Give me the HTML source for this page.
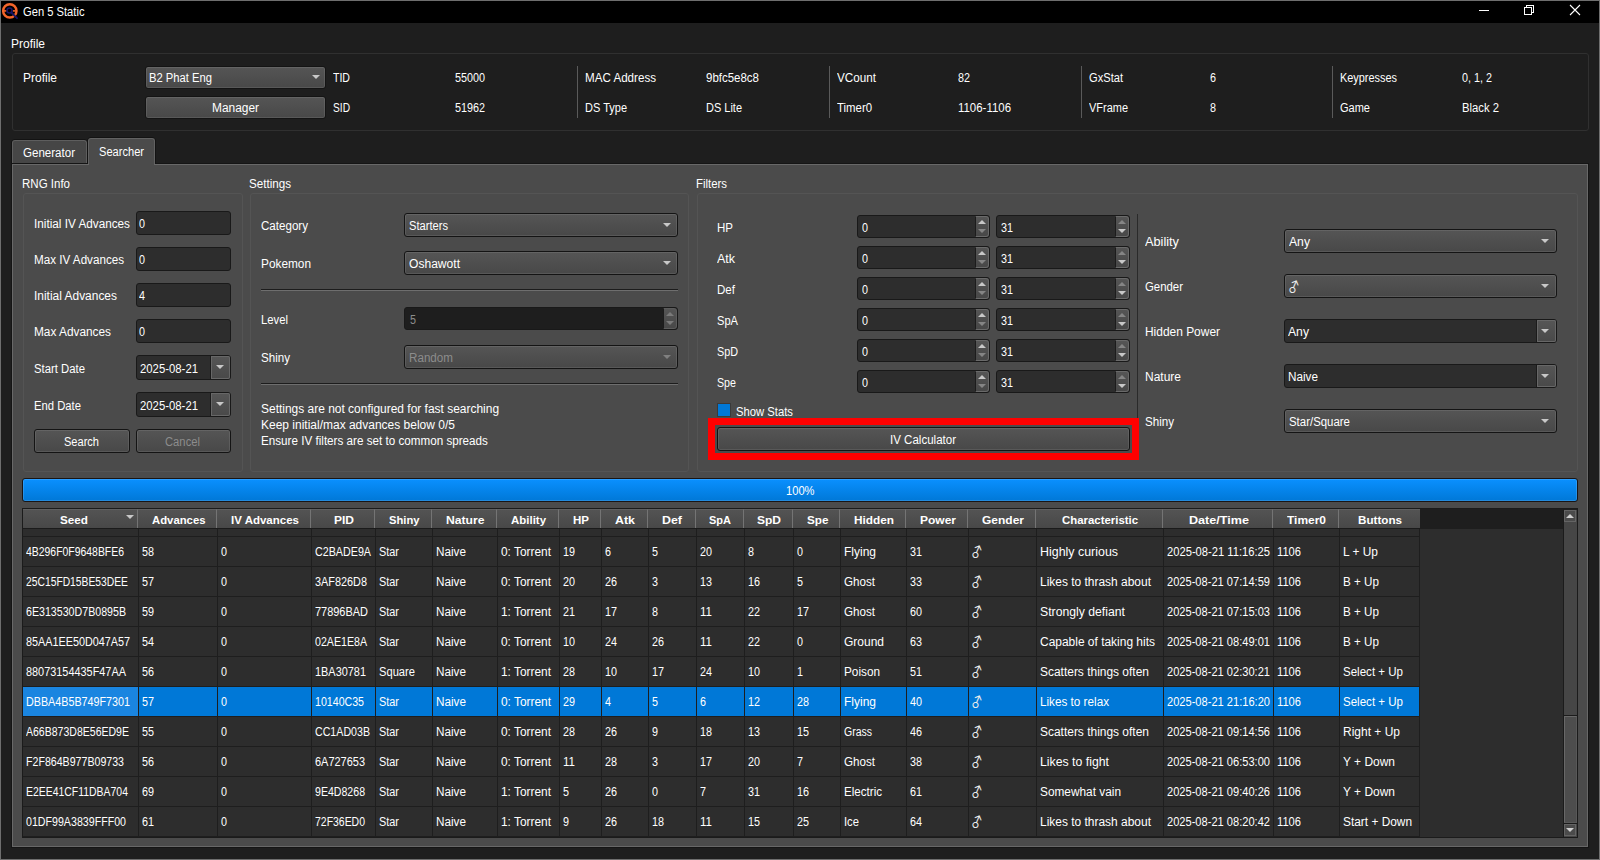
<!DOCTYPE html>
<html lang="en"><head><meta charset="utf-8"><title>Gen 5 Static</title>
<style>
html,body{margin:0;padding:0}
body{width:1600px;height:860px;background:#1e1e1e;overflow:hidden;position:relative;font-family:"Liberation Sans","DejaVu Sans",sans-serif;font-size:12px;color:#fff}
div,span.t,svg{position:absolute;box-sizing:border-box}
.t{line-height:14px;white-space:nowrap;transform-origin:0 0;display:block}
.b{font-weight:bold;font-size:11.5px}
.dis{color:#8c8c8c}
.g{font-family:"Noto Sans CJK JP","DejaVu Sans",sans-serif;font-size:14px;transform:rotate(-22deg);transform-origin:4.5px 10.5px;color:#ececec}
.cb{border:1px solid #141414;border-radius:3px;background:linear-gradient(#555,#484848);box-shadow:inset 0 0 0 1px rgba(255,255,255,.09)}
.in{border:1px solid #191919;border-radius:3px;background:#2d2d2d}
.ind{border:1px solid #191919;border-radius:3px;background:#1e1e1e}
.gb{border:1px solid #545454;border-radius:3px}
.sep{background:#5a5a5a}
.arr{width:0;height:0;border-left:4px solid transparent;border-right:4px solid transparent;border-top:4px solid #c8c8c8}
.arrs{width:0;height:0;border-left:4px solid transparent;border-right:4px solid transparent}
.sb{background:linear-gradient(#555,#484848);border:1px solid #6a6a6a;border-radius:0 3px 3px 0}
.hl{background:#1e1e1e}
</style></head><body>
<div style="left:0px;top:0px;width:1600px;height:860px;border:1px solid #6e6e6e"></div>
<div style="left:1px;top:1px;width:1598px;height:22px;background:#000"></div>
<svg style="left:0px;top:0px" width="24" height="24" viewBox="0 0 24 24">
<circle cx="9.8" cy="10.9" r="6.65" fill="none" stroke="#f4642a" stroke-width="2.5"/>
<rect x="4" y="10.1" width="2.4" height="1.6" fill="#f4642a"/><rect x="12.9" y="10.1" width="2.4" height="1.6" fill="#f4642a"/>
<circle cx="9.5" cy="10.6" r="2.5" fill="#000" stroke="#1b1466" stroke-width="1.5"/>
<line x1="11.3" y1="12.5" x2="17" y2="18.2" stroke="#1b1466" stroke-width="1.9" stroke-linecap="round"/>
</svg>
<svg style="left:1470px;top:1px" width="120" height="22" viewBox="0 0 120 22" shape-rendering="crispEdges">
<rect x="9" y="9" width="10" height="1" fill="#fff"/>
<path d="M56.5 6.5V4.5H63.5V11.5H61.5" fill="none" stroke="#fff"/>
<rect x="54.5" y="6.5" width="7" height="7" fill="none" stroke="#fff"/>
<path d="M100 4L110 14M110 4L100 14" fill="none" stroke="#fff" stroke-width="1.1" shape-rendering="geometricPrecision"/>
</svg>
<div style="left:12px;top:53px;width:1577px;height:78px;border:1px solid #303030;border-radius:3px"></div>
<div class="cb" style="left:145px;top:66px;width:181px;height:23px;"></div>
<div class="arr" style="left:311.5px;top:75px;width:8px;height:4px;"></div>
<div class="cb" style="left:145px;top:96px;width:181px;height:23px;"></div>
<div class="sep" style="left:577px;top:66px;width:1px;height:52px;"></div>
<div class="sep" style="left:829px;top:66px;width:1px;height:52px;"></div>
<div class="sep" style="left:1081px;top:66px;width:1px;height:52px;"></div>
<div class="sep" style="left:1332px;top:66px;width:1px;height:52px;"></div>
<div style="left:12px;top:164px;width:1576px;height:683px;background:#4b4b4b;border:1px solid #686868;box-shadow:0 0 0 1px #151515"></div>
<div style="left:12px;top:140px;width:75px;height:23px;background:#464646;border:1px solid #5e5e5e;border-bottom:none;border-radius:3px 3px 0 0;box-shadow:-1px 0 0 #131313,1px 0 0 #131313,0 -1px 0 #131313"></div>
<div style="left:88px;top:138px;width:67px;height:26px;background:#4b4b4b;border:1px solid #626262;border-bottom:none;border-radius:3px 3px 0 0;box-shadow:-1px 0 0 #131313,1px 0 0 #131313,0 -1px 0 #131313"></div>
<div style="left:89px;top:164px;width:65px;height:1px;background:#4b4b4b"></div>
<div class="gb" style="left:23px;top:193px;width:220px;height:279px;"></div>
<div class="gb" style="left:250px;top:193px;width:439px;height:279px;"></div>
<div class="gb" style="left:697px;top:193px;width:881px;height:279px;"></div>
<div class="in" style="left:136px;top:211px;width:95px;height:24px;"></div>
<div class="in" style="left:136px;top:247px;width:95px;height:24px;"></div>
<div class="in" style="left:136px;top:283px;width:95px;height:24px;"></div>
<div class="in" style="left:136px;top:319px;width:95px;height:24px;"></div>
<div class="in" style="left:136px;top:355px;width:95px;height:25px;"></div>
<div style="left:210px;top:356px;width:20px;height:23px;background:linear-gradient(#565656,#494949);border-left:1px solid #1b1b1b;border-radius:0 2px 2px 0;box-shadow:inset 0 0 0 1px #676767"></div>
<div class="arr" style="left:215.5px;top:365px;width:8px;height:4px;"></div>
<div class="in" style="left:136px;top:392px;width:95px;height:25px;"></div>
<div style="left:210px;top:393px;width:20px;height:23px;background:linear-gradient(#565656,#494949);border-left:1px solid #1b1b1b;border-radius:0 2px 2px 0;box-shadow:inset 0 0 0 1px #676767"></div>
<div class="arr" style="left:215.5px;top:402px;width:8px;height:4px;"></div>
<div class="cb" style="left:34px;top:429px;width:96px;height:24px;"></div>
<div class="cb" style="left:136px;top:429px;width:95px;height:24px;"></div>
<div class="cb" style="left:404px;top:213px;width:274px;height:24px;"></div>
<div class="arr" style="left:662.5px;top:223px;width:8px;height:4px;"></div>
<div class="cb" style="left:404px;top:251px;width:274px;height:24px;"></div>
<div class="arr" style="left:662.5px;top:261px;width:8px;height:4px;"></div>
<div style="left:261px;top:289px;width:417px;height:1px;background:#1c1c1c"></div>
<div style="left:261px;top:290px;width:417px;height:1px;background:#6e6e6e"></div>
<div class="ind" style="left:404px;top:307px;width:274px;height:23px;"></div>
<div class="sb" style="left:663px;top:308px;width:14px;height:21px;border-color:#5c5c5c;border-left-color:#1c1c1c"></div>
<div class="arrs" style="left:666px;top:312px;width:8px;height:4px;border-bottom:4px solid #7a7a7a"></div>
<div class="arrs" style="left:666px;top:321px;width:8px;height:4px;border-top:4px solid #7a7a7a"></div>
<div class="cb" style="left:404px;top:345px;width:274px;height:24px;"></div>
<div class="arr" style="left:662.5px;top:355px;width:8px;height:4px;border-top-color:#808080"></div>
<div style="left:261px;top:383px;width:417px;height:1px;background:#1c1c1c"></div>
<div style="left:261px;top:384px;width:417px;height:1px;background:#6e6e6e"></div>
<div class="in" style="left:857px;top:215px;width:133px;height:23px;"></div>
<div class="sb" style="left:975px;top:216px;width:14px;height:21px;border-left-color:#1c1c1c"></div>
<div class="arrs" style="left:978px;top:220px;width:8px;height:4px;border-bottom:4px solid #c8c8c8"></div>
<div class="arrs" style="left:978px;top:229px;width:8px;height:4px;border-top:4px solid #858585"></div>
<div class="in" style="left:996px;top:215px;width:134px;height:23px;"></div>
<div class="sb" style="left:1115px;top:216px;width:14px;height:21px;border-left-color:#1c1c1c"></div>
<div class="arrs" style="left:1118px;top:220px;width:8px;height:4px;border-bottom:4px solid #858585"></div>
<div class="arrs" style="left:1118px;top:229px;width:8px;height:4px;border-top:4px solid #c8c8c8"></div>
<div class="in" style="left:857px;top:246px;width:133px;height:23px;"></div>
<div class="sb" style="left:975px;top:247px;width:14px;height:21px;border-left-color:#1c1c1c"></div>
<div class="arrs" style="left:978px;top:251px;width:8px;height:4px;border-bottom:4px solid #c8c8c8"></div>
<div class="arrs" style="left:978px;top:260px;width:8px;height:4px;border-top:4px solid #858585"></div>
<div class="in" style="left:996px;top:246px;width:134px;height:23px;"></div>
<div class="sb" style="left:1115px;top:247px;width:14px;height:21px;border-left-color:#1c1c1c"></div>
<div class="arrs" style="left:1118px;top:251px;width:8px;height:4px;border-bottom:4px solid #858585"></div>
<div class="arrs" style="left:1118px;top:260px;width:8px;height:4px;border-top:4px solid #c8c8c8"></div>
<div class="in" style="left:857px;top:277px;width:133px;height:23px;"></div>
<div class="sb" style="left:975px;top:278px;width:14px;height:21px;border-left-color:#1c1c1c"></div>
<div class="arrs" style="left:978px;top:282px;width:8px;height:4px;border-bottom:4px solid #c8c8c8"></div>
<div class="arrs" style="left:978px;top:291px;width:8px;height:4px;border-top:4px solid #858585"></div>
<div class="in" style="left:996px;top:277px;width:134px;height:23px;"></div>
<div class="sb" style="left:1115px;top:278px;width:14px;height:21px;border-left-color:#1c1c1c"></div>
<div class="arrs" style="left:1118px;top:282px;width:8px;height:4px;border-bottom:4px solid #858585"></div>
<div class="arrs" style="left:1118px;top:291px;width:8px;height:4px;border-top:4px solid #c8c8c8"></div>
<div class="in" style="left:857px;top:308px;width:133px;height:23px;"></div>
<div class="sb" style="left:975px;top:309px;width:14px;height:21px;border-left-color:#1c1c1c"></div>
<div class="arrs" style="left:978px;top:313px;width:8px;height:4px;border-bottom:4px solid #c8c8c8"></div>
<div class="arrs" style="left:978px;top:322px;width:8px;height:4px;border-top:4px solid #858585"></div>
<div class="in" style="left:996px;top:308px;width:134px;height:23px;"></div>
<div class="sb" style="left:1115px;top:309px;width:14px;height:21px;border-left-color:#1c1c1c"></div>
<div class="arrs" style="left:1118px;top:313px;width:8px;height:4px;border-bottom:4px solid #858585"></div>
<div class="arrs" style="left:1118px;top:322px;width:8px;height:4px;border-top:4px solid #c8c8c8"></div>
<div class="in" style="left:857px;top:339px;width:133px;height:23px;"></div>
<div class="sb" style="left:975px;top:340px;width:14px;height:21px;border-left-color:#1c1c1c"></div>
<div class="arrs" style="left:978px;top:344px;width:8px;height:4px;border-bottom:4px solid #c8c8c8"></div>
<div class="arrs" style="left:978px;top:353px;width:8px;height:4px;border-top:4px solid #858585"></div>
<div class="in" style="left:996px;top:339px;width:134px;height:23px;"></div>
<div class="sb" style="left:1115px;top:340px;width:14px;height:21px;border-left-color:#1c1c1c"></div>
<div class="arrs" style="left:1118px;top:344px;width:8px;height:4px;border-bottom:4px solid #858585"></div>
<div class="arrs" style="left:1118px;top:353px;width:8px;height:4px;border-top:4px solid #c8c8c8"></div>
<div class="in" style="left:857px;top:370px;width:133px;height:23px;"></div>
<div class="sb" style="left:975px;top:371px;width:14px;height:21px;border-left-color:#1c1c1c"></div>
<div class="arrs" style="left:978px;top:375px;width:8px;height:4px;border-bottom:4px solid #c8c8c8"></div>
<div class="arrs" style="left:978px;top:384px;width:8px;height:4px;border-top:4px solid #858585"></div>
<div class="in" style="left:996px;top:370px;width:134px;height:23px;"></div>
<div class="sb" style="left:1115px;top:371px;width:14px;height:21px;border-left-color:#1c1c1c"></div>
<div class="arrs" style="left:1118px;top:375px;width:8px;height:4px;border-bottom:4px solid #858585"></div>
<div class="arrs" style="left:1118px;top:384px;width:8px;height:4px;border-top:4px solid #c8c8c8"></div>
<div style="left:717px;top:403px;width:14px;height:14px;background:#0078d7;border:1px solid #3a3a3a"></div>
<div style="left:1137px;top:214px;width:1px;height:246px;background:#2a2a2a"></div>
<div class="cb" style="left:717px;top:427px;width:413px;height:24px;"></div>
<div style="left:708px;top:418px;width:431px;height:42px;border:7px solid #ff0000"></div>
<div class="cb" style="left:1284px;top:229px;width:273px;height:24px;"></div>
<div class="arr" style="left:1541.2px;top:239px;width:8px;height:4px;"></div>
<div class="cb" style="left:1284px;top:274px;width:273px;height:24px;"></div>
<div class="arr" style="left:1541.2px;top:284px;width:8px;height:4px;"></div>
<div class="in" style="left:1284px;top:319px;width:273px;height:24px;"></div>
<div style="left:1536px;top:320px;width:20px;height:22px;background:linear-gradient(#565656,#494949);border-left:1px solid #1b1b1b;border-radius:0 2px 2px 0;box-shadow:inset 0 0 0 1px #676767"></div>
<div class="arr" style="left:1541.2px;top:329px;width:8px;height:4px;"></div>
<div class="in" style="left:1284px;top:364px;width:273px;height:24px;"></div>
<div style="left:1536px;top:365px;width:20px;height:22px;background:linear-gradient(#565656,#494949);border-left:1px solid #1b1b1b;border-radius:0 2px 2px 0;box-shadow:inset 0 0 0 1px #676767"></div>
<div class="arr" style="left:1541.2px;top:374px;width:8px;height:4px;"></div>
<div class="cb" style="left:1284px;top:409px;width:273px;height:24px;"></div>
<div class="arr" style="left:1541.2px;top:419px;width:8px;height:4px;"></div>
<div style="left:22px;top:478px;width:1556px;height:24px;border:1px solid #1a1514;border-radius:3px;background:linear-gradient(#0a90ff,#0078d7);box-shadow:inset 0 0 0 1px rgba(255,255,255,.14)"></div>
<div style="left:22px;top:508px;width:1556px;height:330px;background:#2d2d2d;border:1px solid #1b1b1b"></div>
<div style="left:23px;top:509px;width:1554px;height:20px;background:#1e1e1e"></div>
<div style="left:23px;top:509px;width:115px;height:19px;background:linear-gradient(#535353,#484848);border-top:1px solid #606060;border-right:1px solid #747474"></div>
<div style="left:138px;top:509px;width:79px;height:19px;background:linear-gradient(#535353,#484848);border-top:1px solid #606060;border-right:1px solid #747474"></div>
<div style="left:217px;top:509px;width:94px;height:19px;background:linear-gradient(#535353,#484848);border-top:1px solid #606060;border-right:1px solid #747474"></div>
<div style="left:311px;top:509px;width:64px;height:19px;background:linear-gradient(#535353,#484848);border-top:1px solid #606060;border-right:1px solid #747474"></div>
<div style="left:375px;top:509px;width:57px;height:19px;background:linear-gradient(#535353,#484848);border-top:1px solid #606060;border-right:1px solid #747474"></div>
<div style="left:432px;top:509px;width:65px;height:19px;background:linear-gradient(#535353,#484848);border-top:1px solid #606060;border-right:1px solid #747474"></div>
<div style="left:497px;top:509px;width:62px;height:19px;background:linear-gradient(#535353,#484848);border-top:1px solid #606060;border-right:1px solid #747474"></div>
<div style="left:559px;top:509px;width:42px;height:19px;background:linear-gradient(#535353,#484848);border-top:1px solid #606060;border-right:1px solid #747474"></div>
<div style="left:601px;top:509px;width:47px;height:19px;background:linear-gradient(#535353,#484848);border-top:1px solid #606060;border-right:1px solid #747474"></div>
<div style="left:648px;top:509px;width:48px;height:19px;background:linear-gradient(#535353,#484848);border-top:1px solid #606060;border-right:1px solid #747474"></div>
<div style="left:696px;top:509px;width:48px;height:19px;background:linear-gradient(#535353,#484848);border-top:1px solid #606060;border-right:1px solid #747474"></div>
<div style="left:744px;top:509px;width:49px;height:19px;background:linear-gradient(#535353,#484848);border-top:1px solid #606060;border-right:1px solid #747474"></div>
<div style="left:793px;top:509px;width:47px;height:19px;background:linear-gradient(#535353,#484848);border-top:1px solid #606060;border-right:1px solid #747474"></div>
<div style="left:840px;top:509px;width:66px;height:19px;background:linear-gradient(#535353,#484848);border-top:1px solid #606060;border-right:1px solid #747474"></div>
<div style="left:906px;top:509px;width:62px;height:19px;background:linear-gradient(#535353,#484848);border-top:1px solid #606060;border-right:1px solid #747474"></div>
<div style="left:968px;top:509px;width:68px;height:19px;background:linear-gradient(#535353,#484848);border-top:1px solid #606060;border-right:1px solid #747474"></div>
<div style="left:1036px;top:509px;width:127px;height:19px;background:linear-gradient(#535353,#484848);border-top:1px solid #606060;border-right:1px solid #747474"></div>
<div style="left:1163px;top:509px;width:110px;height:19px;background:linear-gradient(#535353,#484848);border-top:1px solid #606060;border-right:1px solid #747474"></div>
<div style="left:1273px;top:509px;width:66px;height:19px;background:linear-gradient(#535353,#484848);border-top:1px solid #606060;border-right:1px solid #747474"></div>
<div style="left:1339px;top:509px;width:81px;height:19px;background:linear-gradient(#535353,#484848);border-top:1px solid #606060"></div>
<div style="left:23px;top:528px;width:1397px;height:1px;background:#1b1b1b"></div>
<div class="arr" style="left:126px;top:515px;width:8px;height:4px;"></div>
<div style="left:23px;top:687px;width:1396px;height:29px;background:#0078d7"></div>
<div style="left:23px;top:687px;width:115px;height:29px;background:#1a85e0"></div>
<div class="hl" style="left:23px;top:536px;width:1397px;height:1px;"></div>
<div class="hl" style="left:23px;top:566px;width:1397px;height:1px;"></div>
<div class="hl" style="left:23px;top:596px;width:1397px;height:1px;"></div>
<div class="hl" style="left:23px;top:626px;width:1397px;height:1px;"></div>
<div class="hl" style="left:23px;top:656px;width:1397px;height:1px;"></div>
<div class="hl" style="left:23px;top:686px;width:1397px;height:1px;"></div>
<div class="hl" style="left:23px;top:716px;width:1397px;height:1px;"></div>
<div class="hl" style="left:23px;top:746px;width:1397px;height:1px;"></div>
<div class="hl" style="left:23px;top:776px;width:1397px;height:1px;"></div>
<div class="hl" style="left:23px;top:806px;width:1397px;height:1px;"></div>
<div class="hl" style="left:23px;top:836px;width:1397px;height:1px;"></div>
<div class="hl" style="left:138px;top:529px;width:1px;height:308px;"></div>
<div class="hl" style="left:217px;top:529px;width:1px;height:308px;"></div>
<div class="hl" style="left:311px;top:529px;width:1px;height:308px;"></div>
<div class="hl" style="left:375px;top:529px;width:1px;height:308px;"></div>
<div class="hl" style="left:432px;top:529px;width:1px;height:308px;"></div>
<div class="hl" style="left:497px;top:529px;width:1px;height:308px;"></div>
<div class="hl" style="left:559px;top:529px;width:1px;height:308px;"></div>
<div class="hl" style="left:601px;top:529px;width:1px;height:308px;"></div>
<div class="hl" style="left:648px;top:529px;width:1px;height:308px;"></div>
<div class="hl" style="left:696px;top:529px;width:1px;height:308px;"></div>
<div class="hl" style="left:744px;top:529px;width:1px;height:308px;"></div>
<div class="hl" style="left:793px;top:529px;width:1px;height:308px;"></div>
<div class="hl" style="left:840px;top:529px;width:1px;height:308px;"></div>
<div class="hl" style="left:906px;top:529px;width:1px;height:308px;"></div>
<div class="hl" style="left:968px;top:529px;width:1px;height:308px;"></div>
<div class="hl" style="left:1036px;top:529px;width:1px;height:308px;"></div>
<div class="hl" style="left:1163px;top:529px;width:1px;height:308px;"></div>
<div class="hl" style="left:1273px;top:529px;width:1px;height:308px;"></div>
<div class="hl" style="left:1339px;top:529px;width:1px;height:308px;"></div>
<div class="hl" style="left:1419px;top:529px;width:1px;height:308px;"></div>
<div style="left:1563px;top:509px;width:1px;height:328px;background:#1b1b1b"></div>
<div style="left:1564px;top:509px;width:13px;height:328px;background:#464646"></div>
<div style="left:1564px;top:509px;width:13px;height:1px;background:#1e1e1e"></div>
<div style="left:1564px;top:510px;width:12px;height:12px;background:#4b4b4b;border:1px solid #646464"></div>
<div class="arrs" style="left:1567px;top:514px;width:6px;height:4px;border-left:4px solid transparent;border-right:4px solid transparent;border-bottom:4px solid #d0d0d0;left:1566px"></div>
<div style="left:1564px;top:715px;width:13px;height:1px;background:#1b1b1b"></div>
<div style="left:1564px;top:716px;width:13px;height:107px;background:#4d4d4d;border:1px solid #686868;border-right-color:#585858;border-bottom-color:#585858"></div>
<div style="left:1564px;top:823px;width:13px;height:1px;background:#1b1b1b"></div>
<div style="left:1564px;top:824px;width:12px;height:12px;background:#4b4b4b;border:1px solid #646464"></div>
<div class="arr" style="left:1566px;top:828px;width:8px;height:4px;border-top-color:#d0d0d0"></div>
<span class="t" style="left:23px;top:5px;transform:scaleX(0.931)">Gen 5 Static</span>
<span class="t" style="left:11px;top:37px;transform:scaleX(1.000)">Profile</span>
<span class="t" style="left:23px;top:71px;transform:scaleX(1.000)">Profile</span>
<span class="t" style="left:149px;top:71px;transform:scaleX(0.935)">B2 Phat Eng</span>
<span class="t" style="left:212px;top:101px;transform:scaleX(0.992)">Manager</span>
<span class="t" style="left:333px;top:71px;transform:scaleX(0.879)">TID</span>
<span class="t" style="left:333px;top:101px;transform:scaleX(0.849)">SID</span>
<span class="t" style="left:455px;top:71px;transform:scaleX(0.899)">55000</span>
<span class="t" style="left:455px;top:101px;transform:scaleX(0.899)">51962</span>
<span class="t" style="left:585px;top:71px;transform:scaleX(0.968)">MAC Address</span>
<span class="t" style="left:585px;top:101px;transform:scaleX(0.917)">DS Type</span>
<span class="t" style="left:706px;top:71px;transform:scaleX(0.957)">9bfc5e8c8</span>
<span class="t" style="left:706px;top:101px;transform:scaleX(0.915)">DS Lite</span>
<span class="t" style="left:837px;top:71px;transform:scaleX(0.974)">VCount</span>
<span class="t" style="left:837px;top:101px;transform:scaleX(0.949)">Timer0</span>
<span class="t" style="left:958px;top:71px;transform:scaleX(0.898)">82</span>
<span class="t" style="left:958px;top:101px;transform:scaleX(0.953)">1106-1106</span>
<span class="t" style="left:1089px;top:71px;transform:scaleX(0.927)">GxStat</span>
<span class="t" style="left:1089px;top:101px;transform:scaleX(0.914)">VFrame</span>
<span class="t" style="left:1210px;top:71px;transform:scaleX(0.897)">6</span>
<span class="t" style="left:1210px;top:101px;transform:scaleX(0.897)">8</span>
<span class="t" style="left:1340px;top:71px;transform:scaleX(0.909)">Keypresses</span>
<span class="t" style="left:1340px;top:101px;transform:scaleX(0.918)">Game</span>
<span class="t" style="left:1462px;top:71px;transform:scaleX(0.899)">0, 1, 2</span>
<span class="t" style="left:1462px;top:101px;transform:scaleX(0.940)">Black 2</span>
<span class="t" style="left:23px;top:146px;transform:scaleX(0.962)">Generator</span>
<span class="t" style="left:99px;top:145px;transform:scaleX(0.924)">Searcher</span>
<span class="t" style="left:22px;top:177px;transform:scaleX(0.960)">RNG Info</span>
<span class="t" style="left:249px;top:177px;transform:scaleX(0.969)">Settings</span>
<span class="t" style="left:696px;top:177px;transform:scaleX(0.949)">Filters</span>
<span class="t" style="left:34px;top:217px;transform:scaleX(0.979)">Initial IV Advances</span>
<span class="t" style="left:139px;top:217px;transform:scaleX(0.897)">0</span>
<span class="t" style="left:34px;top:253px;transform:scaleX(0.971)">Max IV Advances</span>
<span class="t" style="left:139px;top:253px;transform:scaleX(0.897)">0</span>
<span class="t" style="left:34px;top:289px;transform:scaleX(0.995)">Initial Advances</span>
<span class="t" style="left:139px;top:289px;transform:scaleX(0.897)">4</span>
<span class="t" style="left:34px;top:325px;transform:scaleX(0.987)">Max Advances</span>
<span class="t" style="left:139px;top:325px;transform:scaleX(0.897)">0</span>
<span class="t" style="left:34px;top:362px;transform:scaleX(0.944)">Start Date</span>
<span class="t" style="left:140px;top:362px;transform:scaleX(0.945)">2025-08-21</span>
<span class="t" style="left:34px;top:399px;transform:scaleX(0.939)">End Date</span>
<span class="t" style="left:140px;top:399px;transform:scaleX(0.945)">2025-08-21</span>
<span class="t" style="left:64px;top:435px;transform:scaleX(0.920)">Search</span>
<span class="t dis" style="left:165px;top:435px;transform:scaleX(0.937)">Cancel</span>
<span class="t" style="left:261px;top:219px;transform:scaleX(0.965)">Category</span>
<span class="t" style="left:409px;top:219px;transform:scaleX(0.928)">Starters</span>
<span class="t" style="left:261px;top:257px;transform:scaleX(0.986)">Pokemon</span>
<span class="t" style="left:409px;top:257px;transform:scaleX(1.006)">Oshawott</span>
<span class="t" style="left:261px;top:313px;transform:scaleX(0.941)">Level</span>
<span class="t dis" style="left:410px;top:313px;transform:scaleX(0.897)">5</span>
<span class="t" style="left:261px;top:351px;transform:scaleX(0.966)">Shiny</span>
<span class="t dis" style="left:409px;top:351px;transform:scaleX(0.970)">Random</span>
<span class="t" style="left:261px;top:402px;transform:scaleX(0.997)">Settings are not configured for fast searching</span>
<span class="t" style="left:261px;top:418px;transform:scaleX(0.999)">Keep initial/max advances below 0/5</span>
<span class="t" style="left:261px;top:434px;transform:scaleX(0.972)">Ensure IV filters are set to common spreads</span>
<span class="t" style="left:717px;top:221px;transform:scaleX(0.960)">HP</span>
<span class="t" style="left:862px;top:221px;transform:scaleX(0.897)">0</span>
<span class="t" style="left:1001px;top:221px;transform:scaleX(0.898)">31</span>
<span class="t" style="left:717px;top:252px;transform:scaleX(1.038)">Atk</span>
<span class="t" style="left:862px;top:252px;transform:scaleX(0.897)">0</span>
<span class="t" style="left:1001px;top:252px;transform:scaleX(0.898)">31</span>
<span class="t" style="left:717px;top:283px;transform:scaleX(0.963)">Def</span>
<span class="t" style="left:862px;top:283px;transform:scaleX(0.897)">0</span>
<span class="t" style="left:1001px;top:283px;transform:scaleX(0.898)">31</span>
<span class="t" style="left:717px;top:314px;transform:scaleX(0.926)">SpA</span>
<span class="t" style="left:862px;top:314px;transform:scaleX(0.897)">0</span>
<span class="t" style="left:1001px;top:314px;transform:scaleX(0.898)">31</span>
<span class="t" style="left:717px;top:345px;transform:scaleX(0.900)">SpD</span>
<span class="t" style="left:862px;top:345px;transform:scaleX(0.897)">0</span>
<span class="t" style="left:1001px;top:345px;transform:scaleX(0.898)">31</span>
<span class="t" style="left:717px;top:376px;transform:scaleX(0.890)">Spe</span>
<span class="t" style="left:862px;top:376px;transform:scaleX(0.897)">0</span>
<span class="t" style="left:1001px;top:376px;transform:scaleX(0.898)">31</span>
<span class="t" style="left:736px;top:405px;transform:scaleX(0.939)">Show Stats</span>
<span class="t" style="left:890px;top:433px;transform:scaleX(0.961)">IV Calculator</span>
<span class="t" style="left:1145px;top:235px;transform:scaleX(1.062)">Ability</span>
<span class="t" style="left:1289px;top:235px;transform:scaleX(1.015)">Any</span>
<span class="t" style="left:1145px;top:280px;transform:scaleX(0.949)">Gender</span>
<span class="t g" style="left:1288px;top:280px">♂</span>
<span class="t" style="left:1145px;top:325px;transform:scaleX(0.995)">Hidden Power</span>
<span class="t" style="left:1288px;top:325px;transform:scaleX(1.015)">Any</span>
<span class="t" style="left:1145px;top:370px;transform:scaleX(0.999)">Nature</span>
<span class="t" style="left:1288px;top:370px;transform:scaleX(0.978)">Naive</span>
<span class="t" style="left:1145px;top:415px;transform:scaleX(0.966)">Shiny</span>
<span class="t" style="left:1289px;top:415px;transform:scaleX(0.952)">Star/Square</span>
<span class="t" style="left:786px;top:484px;transform:scaleX(0.928)">100%</span>
<span class="t b" style="left:60px;top:513px;transform:scaleX(1.018)">Seed</span>
<span class="t b" style="left:152px;top:513px;transform:scaleX(0.984)">Advances</span>
<span class="t b" style="left:231px;top:513px;transform:scaleX(1.000)">IV Advances</span>
<span class="t b" style="left:334px;top:513px;transform:scaleX(1.043)">PID</span>
<span class="t b" style="left:389px;top:513px;transform:scaleX(0.974)">Shiny</span>
<span class="t b" style="left:446px;top:513px;transform:scaleX(1.057)">Nature</span>
<span class="t b" style="left:511px;top:513px;transform:scaleX(0.996)">Ability</span>
<span class="t b" style="left:573px;top:513px;transform:scaleX(1.001)">HP</span>
<span class="t b" style="left:615px;top:513px;transform:scaleX(1.079)">Atk</span>
<span class="t b" style="left:662px;top:513px;transform:scaleX(1.079)">Def</span>
<span class="t b" style="left:709px;top:513px;transform:scaleX(0.957)">SpA</span>
<span class="t b" style="left:757px;top:513px;transform:scaleX(1.043)">SpD</span>
<span class="t b" style="left:807px;top:513px;transform:scaleX(1.019)">Spe</span>
<span class="t b" style="left:854px;top:513px;transform:scaleX(1.026)">Hidden</span>
<span class="t b" style="left:920px;top:513px;transform:scaleX(1.043)">Power</span>
<span class="t b" style="left:982px;top:513px;transform:scaleX(1.043)">Gender</span>
<span class="t b" style="left:1062px;top:513px;transform:scaleX(0.991)">Characteristic</span>
<span class="t b" style="left:1189px;top:513px;transform:scaleX(1.096)">Date/Time</span>
<span class="t b" style="left:1287px;top:513px;transform:scaleX(1.040)">Timer0</span>
<span class="t b" style="left:1358px;top:513px;transform:scaleX(1.013)">Buttons</span>
<span class="t" style="left:26px;top:545px;transform:scaleX(0.869)">4B296F0F9648BFE6</span>
<span class="t" style="left:142px;top:545px;transform:scaleX(0.898)">58</span>
<span class="t" style="left:221px;top:545px;transform:scaleX(0.897)">0</span>
<span class="t" style="left:315px;top:545px;transform:scaleX(0.893)">C2BADE9A</span>
<span class="t" style="left:379px;top:545px;transform:scaleX(0.908)">Star</span>
<span class="t" style="left:436px;top:545px;transform:scaleX(0.978)">Naive</span>
<span class="t" style="left:501px;top:545px;transform:scaleX(0.990)">0: Torrent</span>
<span class="t" style="left:563px;top:545px;transform:scaleX(0.898)">19</span>
<span class="t" style="left:605px;top:545px;transform:scaleX(0.897)">6</span>
<span class="t" style="left:652px;top:545px;transform:scaleX(0.897)">5</span>
<span class="t" style="left:700px;top:545px;transform:scaleX(0.898)">20</span>
<span class="t" style="left:748px;top:545px;transform:scaleX(0.897)">8</span>
<span class="t" style="left:797px;top:545px;transform:scaleX(0.897)">0</span>
<span class="t" style="left:844px;top:545px;transform:scaleX(1.000)">Flying</span>
<span class="t" style="left:910px;top:545px;transform:scaleX(0.898)">31</span>
<span class="t g" style="left:971px;top:545px">♂</span>
<span class="t" style="left:1040px;top:545px;transform:scaleX(1.035)">Highly curious</span>
<span class="t" style="left:1167px;top:545px;transform:scaleX(0.932)">2025-08-21 11:16:25</span>
<span class="t" style="left:1277px;top:545px;transform:scaleX(0.930)">1106</span>
<span class="t" style="left:1343px;top:545px;transform:scaleX(0.993)">L + Up</span>
<span class="t" style="left:26px;top:575px;transform:scaleX(0.859)">25C15FD15BE53DEE</span>
<span class="t" style="left:142px;top:575px;transform:scaleX(0.898)">57</span>
<span class="t" style="left:221px;top:575px;transform:scaleX(0.897)">0</span>
<span class="t" style="left:315px;top:575px;transform:scaleX(0.906)">3AF826D8</span>
<span class="t" style="left:379px;top:575px;transform:scaleX(0.908)">Star</span>
<span class="t" style="left:436px;top:575px;transform:scaleX(0.978)">Naive</span>
<span class="t" style="left:501px;top:575px;transform:scaleX(0.990)">0: Torrent</span>
<span class="t" style="left:563px;top:575px;transform:scaleX(0.898)">20</span>
<span class="t" style="left:605px;top:575px;transform:scaleX(0.898)">26</span>
<span class="t" style="left:652px;top:575px;transform:scaleX(0.897)">3</span>
<span class="t" style="left:700px;top:575px;transform:scaleX(0.898)">13</span>
<span class="t" style="left:748px;top:575px;transform:scaleX(0.898)">16</span>
<span class="t" style="left:797px;top:575px;transform:scaleX(0.897)">5</span>
<span class="t" style="left:844px;top:575px;transform:scaleX(0.968)">Ghost</span>
<span class="t" style="left:910px;top:575px;transform:scaleX(0.898)">33</span>
<span class="t g" style="left:971px;top:575px">♂</span>
<span class="t" style="left:1040px;top:575px;transform:scaleX(0.996)">Likes to thrash about</span>
<span class="t" style="left:1167px;top:575px;transform:scaleX(0.924)">2025-08-21 07:14:59</span>
<span class="t" style="left:1277px;top:575px;transform:scaleX(0.930)">1106</span>
<span class="t" style="left:1343px;top:575px;transform:scaleX(0.972)">B + Up</span>
<span class="t" style="left:26px;top:605px;transform:scaleX(0.887)">6E313530D7B0895B</span>
<span class="t" style="left:142px;top:605px;transform:scaleX(0.898)">59</span>
<span class="t" style="left:221px;top:605px;transform:scaleX(0.897)">0</span>
<span class="t" style="left:315px;top:605px;transform:scaleX(0.913)">77896BAD</span>
<span class="t" style="left:379px;top:605px;transform:scaleX(0.908)">Star</span>
<span class="t" style="left:436px;top:605px;transform:scaleX(0.978)">Naive</span>
<span class="t" style="left:501px;top:605px;transform:scaleX(0.990)">1: Torrent</span>
<span class="t" style="left:563px;top:605px;transform:scaleX(0.898)">21</span>
<span class="t" style="left:605px;top:605px;transform:scaleX(0.898)">17</span>
<span class="t" style="left:652px;top:605px;transform:scaleX(0.897)">8</span>
<span class="t" style="left:700px;top:605px;transform:scaleX(0.962)">11</span>
<span class="t" style="left:748px;top:605px;transform:scaleX(0.898)">22</span>
<span class="t" style="left:797px;top:605px;transform:scaleX(0.898)">17</span>
<span class="t" style="left:844px;top:605px;transform:scaleX(0.968)">Ghost</span>
<span class="t" style="left:910px;top:605px;transform:scaleX(0.898)">60</span>
<span class="t g" style="left:971px;top:605px">♂</span>
<span class="t" style="left:1040px;top:605px;transform:scaleX(1.019)">Strongly defiant</span>
<span class="t" style="left:1167px;top:605px;transform:scaleX(0.924)">2025-08-21 07:15:03</span>
<span class="t" style="left:1277px;top:605px;transform:scaleX(0.930)">1106</span>
<span class="t" style="left:1343px;top:605px;transform:scaleX(0.972)">B + Up</span>
<span class="t" style="left:26px;top:635px;transform:scaleX(0.901)">85AA1EE50D047A57</span>
<span class="t" style="left:142px;top:635px;transform:scaleX(0.898)">54</span>
<span class="t" style="left:221px;top:635px;transform:scaleX(0.897)">0</span>
<span class="t" style="left:315px;top:635px;transform:scaleX(0.886)">02AE1E8A</span>
<span class="t" style="left:379px;top:635px;transform:scaleX(0.908)">Star</span>
<span class="t" style="left:436px;top:635px;transform:scaleX(0.978)">Naive</span>
<span class="t" style="left:501px;top:635px;transform:scaleX(0.990)">0: Torrent</span>
<span class="t" style="left:563px;top:635px;transform:scaleX(0.898)">10</span>
<span class="t" style="left:605px;top:635px;transform:scaleX(0.898)">24</span>
<span class="t" style="left:652px;top:635px;transform:scaleX(0.898)">26</span>
<span class="t" style="left:700px;top:635px;transform:scaleX(0.962)">11</span>
<span class="t" style="left:748px;top:635px;transform:scaleX(0.898)">22</span>
<span class="t" style="left:797px;top:635px;transform:scaleX(0.897)">0</span>
<span class="t" style="left:844px;top:635px;transform:scaleX(0.999)">Ground</span>
<span class="t" style="left:910px;top:635px;transform:scaleX(0.898)">63</span>
<span class="t g" style="left:971px;top:635px">♂</span>
<span class="t" style="left:1040px;top:635px;transform:scaleX(0.996)">Capable of taking hits</span>
<span class="t" style="left:1167px;top:635px;transform:scaleX(0.924)">2025-08-21 08:49:01</span>
<span class="t" style="left:1277px;top:635px;transform:scaleX(0.930)">1106</span>
<span class="t" style="left:1343px;top:635px;transform:scaleX(0.972)">B + Up</span>
<span class="t" style="left:26px;top:665px;transform:scaleX(0.908)">88073154435F47AA</span>
<span class="t" style="left:142px;top:665px;transform:scaleX(0.898)">56</span>
<span class="t" style="left:221px;top:665px;transform:scaleX(0.897)">0</span>
<span class="t" style="left:315px;top:665px;transform:scaleX(0.910)">1BA30781</span>
<span class="t" style="left:379px;top:665px;transform:scaleX(0.930)">Square</span>
<span class="t" style="left:436px;top:665px;transform:scaleX(0.978)">Naive</span>
<span class="t" style="left:501px;top:665px;transform:scaleX(0.990)">1: Torrent</span>
<span class="t" style="left:563px;top:665px;transform:scaleX(0.898)">28</span>
<span class="t" style="left:605px;top:665px;transform:scaleX(0.898)">10</span>
<span class="t" style="left:652px;top:665px;transform:scaleX(0.898)">17</span>
<span class="t" style="left:700px;top:665px;transform:scaleX(0.898)">24</span>
<span class="t" style="left:748px;top:665px;transform:scaleX(0.898)">10</span>
<span class="t" style="left:797px;top:665px;transform:scaleX(0.897)">1</span>
<span class="t" style="left:844px;top:665px;transform:scaleX(0.981)">Poison</span>
<span class="t" style="left:910px;top:665px;transform:scaleX(0.898)">51</span>
<span class="t g" style="left:971px;top:665px">♂</span>
<span class="t" style="left:1040px;top:665px;transform:scaleX(0.996)">Scatters things often</span>
<span class="t" style="left:1167px;top:665px;transform:scaleX(0.924)">2025-08-21 02:30:21</span>
<span class="t" style="left:1277px;top:665px;transform:scaleX(0.930)">1106</span>
<span class="t" style="left:1343px;top:665px;transform:scaleX(0.962)">Select + Up</span>
<span class="t" style="left:26px;top:695px;transform:scaleX(0.896)">DBBA4B5B749F7301</span>
<span class="t" style="left:142px;top:695px;transform:scaleX(0.898)">57</span>
<span class="t" style="left:221px;top:695px;transform:scaleX(0.897)">0</span>
<span class="t" style="left:315px;top:695px;transform:scaleX(0.885)">10140C35</span>
<span class="t" style="left:379px;top:695px;transform:scaleX(0.908)">Star</span>
<span class="t" style="left:436px;top:695px;transform:scaleX(0.978)">Naive</span>
<span class="t" style="left:501px;top:695px;transform:scaleX(0.990)">0: Torrent</span>
<span class="t" style="left:563px;top:695px;transform:scaleX(0.898)">29</span>
<span class="t" style="left:605px;top:695px;transform:scaleX(0.897)">4</span>
<span class="t" style="left:652px;top:695px;transform:scaleX(0.897)">5</span>
<span class="t" style="left:700px;top:695px;transform:scaleX(0.897)">6</span>
<span class="t" style="left:748px;top:695px;transform:scaleX(0.898)">12</span>
<span class="t" style="left:797px;top:695px;transform:scaleX(0.898)">28</span>
<span class="t" style="left:844px;top:695px;transform:scaleX(1.000)">Flying</span>
<span class="t" style="left:910px;top:695px;transform:scaleX(0.898)">40</span>
<span class="t g" style="left:971px;top:695px">♂</span>
<span class="t" style="left:1040px;top:695px;transform:scaleX(0.976)">Likes to relax</span>
<span class="t" style="left:1167px;top:695px;transform:scaleX(0.924)">2025-08-21 21:16:20</span>
<span class="t" style="left:1277px;top:695px;transform:scaleX(0.930)">1106</span>
<span class="t" style="left:1343px;top:695px;transform:scaleX(0.962)">Select + Up</span>
<span class="t" style="left:26px;top:725px;transform:scaleX(0.877)">A66B873D8E56ED9E</span>
<span class="t" style="left:142px;top:725px;transform:scaleX(0.898)">55</span>
<span class="t" style="left:221px;top:725px;transform:scaleX(0.897)">0</span>
<span class="t" style="left:315px;top:725px;transform:scaleX(0.887)">CC1AD03B</span>
<span class="t" style="left:379px;top:725px;transform:scaleX(0.908)">Star</span>
<span class="t" style="left:436px;top:725px;transform:scaleX(0.978)">Naive</span>
<span class="t" style="left:501px;top:725px;transform:scaleX(0.990)">0: Torrent</span>
<span class="t" style="left:563px;top:725px;transform:scaleX(0.898)">28</span>
<span class="t" style="left:605px;top:725px;transform:scaleX(0.898)">26</span>
<span class="t" style="left:652px;top:725px;transform:scaleX(0.897)">9</span>
<span class="t" style="left:700px;top:725px;transform:scaleX(0.898)">18</span>
<span class="t" style="left:748px;top:725px;transform:scaleX(0.898)">13</span>
<span class="t" style="left:797px;top:725px;transform:scaleX(0.898)">15</span>
<span class="t" style="left:844px;top:725px;transform:scaleX(0.875)">Grass</span>
<span class="t" style="left:910px;top:725px;transform:scaleX(0.898)">46</span>
<span class="t g" style="left:971px;top:725px">♂</span>
<span class="t" style="left:1040px;top:725px;transform:scaleX(0.996)">Scatters things often</span>
<span class="t" style="left:1167px;top:725px;transform:scaleX(0.924)">2025-08-21 09:14:56</span>
<span class="t" style="left:1277px;top:725px;transform:scaleX(0.930)">1106</span>
<span class="t" style="left:1343px;top:725px;transform:scaleX(0.999)">Right + Up</span>
<span class="t" style="left:26px;top:755px;transform:scaleX(0.885)">F2F864B977B09733</span>
<span class="t" style="left:142px;top:755px;transform:scaleX(0.898)">56</span>
<span class="t" style="left:221px;top:755px;transform:scaleX(0.897)">0</span>
<span class="t" style="left:315px;top:755px;transform:scaleX(0.914)">6A727653</span>
<span class="t" style="left:379px;top:755px;transform:scaleX(0.908)">Star</span>
<span class="t" style="left:436px;top:755px;transform:scaleX(0.978)">Naive</span>
<span class="t" style="left:501px;top:755px;transform:scaleX(0.990)">0: Torrent</span>
<span class="t" style="left:563px;top:755px;transform:scaleX(0.962)">11</span>
<span class="t" style="left:605px;top:755px;transform:scaleX(0.898)">28</span>
<span class="t" style="left:652px;top:755px;transform:scaleX(0.897)">3</span>
<span class="t" style="left:700px;top:755px;transform:scaleX(0.898)">17</span>
<span class="t" style="left:748px;top:755px;transform:scaleX(0.898)">20</span>
<span class="t" style="left:797px;top:755px;transform:scaleX(0.897)">7</span>
<span class="t" style="left:844px;top:755px;transform:scaleX(0.968)">Ghost</span>
<span class="t" style="left:910px;top:755px;transform:scaleX(0.898)">38</span>
<span class="t g" style="left:971px;top:755px">♂</span>
<span class="t" style="left:1040px;top:755px;transform:scaleX(1.024)">Likes to fight</span>
<span class="t" style="left:1167px;top:755px;transform:scaleX(0.924)">2025-08-21 06:53:00</span>
<span class="t" style="left:1277px;top:755px;transform:scaleX(0.930)">1106</span>
<span class="t" style="left:1343px;top:755px;transform:scaleX(0.997)">Y + Down</span>
<span class="t" style="left:26px;top:785px;transform:scaleX(0.870)">E2EE41CF11DBA704</span>
<span class="t" style="left:142px;top:785px;transform:scaleX(0.898)">69</span>
<span class="t" style="left:221px;top:785px;transform:scaleX(0.897)">0</span>
<span class="t" style="left:315px;top:785px;transform:scaleX(0.882)">9E4D8268</span>
<span class="t" style="left:379px;top:785px;transform:scaleX(0.908)">Star</span>
<span class="t" style="left:436px;top:785px;transform:scaleX(0.978)">Naive</span>
<span class="t" style="left:501px;top:785px;transform:scaleX(0.990)">1: Torrent</span>
<span class="t" style="left:563px;top:785px;transform:scaleX(0.897)">5</span>
<span class="t" style="left:605px;top:785px;transform:scaleX(0.898)">26</span>
<span class="t" style="left:652px;top:785px;transform:scaleX(0.897)">0</span>
<span class="t" style="left:700px;top:785px;transform:scaleX(0.897)">7</span>
<span class="t" style="left:748px;top:785px;transform:scaleX(0.898)">31</span>
<span class="t" style="left:797px;top:785px;transform:scaleX(0.898)">16</span>
<span class="t" style="left:844px;top:785px;transform:scaleX(0.966)">Electric</span>
<span class="t" style="left:910px;top:785px;transform:scaleX(0.898)">61</span>
<span class="t g" style="left:971px;top:785px">♂</span>
<span class="t" style="left:1040px;top:785px;transform:scaleX(0.987)">Somewhat vain</span>
<span class="t" style="left:1167px;top:785px;transform:scaleX(0.924)">2025-08-21 09:40:26</span>
<span class="t" style="left:1277px;top:785px;transform:scaleX(0.930)">1106</span>
<span class="t" style="left:1343px;top:785px;transform:scaleX(0.997)">Y + Down</span>
<span class="t" style="left:26px;top:815px;transform:scaleX(0.887)">01DF99A3839FFF00</span>
<span class="t" style="left:142px;top:815px;transform:scaleX(0.898)">61</span>
<span class="t" style="left:221px;top:815px;transform:scaleX(0.897)">0</span>
<span class="t" style="left:315px;top:815px;transform:scaleX(0.871)">72F36ED0</span>
<span class="t" style="left:379px;top:815px;transform:scaleX(0.908)">Star</span>
<span class="t" style="left:436px;top:815px;transform:scaleX(0.978)">Naive</span>
<span class="t" style="left:501px;top:815px;transform:scaleX(0.990)">1: Torrent</span>
<span class="t" style="left:563px;top:815px;transform:scaleX(0.897)">9</span>
<span class="t" style="left:605px;top:815px;transform:scaleX(0.898)">26</span>
<span class="t" style="left:652px;top:815px;transform:scaleX(0.898)">18</span>
<span class="t" style="left:700px;top:815px;transform:scaleX(0.962)">11</span>
<span class="t" style="left:748px;top:815px;transform:scaleX(0.898)">15</span>
<span class="t" style="left:797px;top:815px;transform:scaleX(0.898)">25</span>
<span class="t" style="left:844px;top:815px;transform:scaleX(0.937)">Ice</span>
<span class="t" style="left:910px;top:815px;transform:scaleX(0.898)">64</span>
<span class="t g" style="left:971px;top:815px">♂</span>
<span class="t" style="left:1040px;top:815px;transform:scaleX(0.996)">Likes to thrash about</span>
<span class="t" style="left:1167px;top:815px;transform:scaleX(0.924)">2025-08-21 08:20:42</span>
<span class="t" style="left:1277px;top:815px;transform:scaleX(0.930)">1106</span>
<span class="t" style="left:1343px;top:815px;transform:scaleX(0.990)">Start + Down</span>
</body></html>
